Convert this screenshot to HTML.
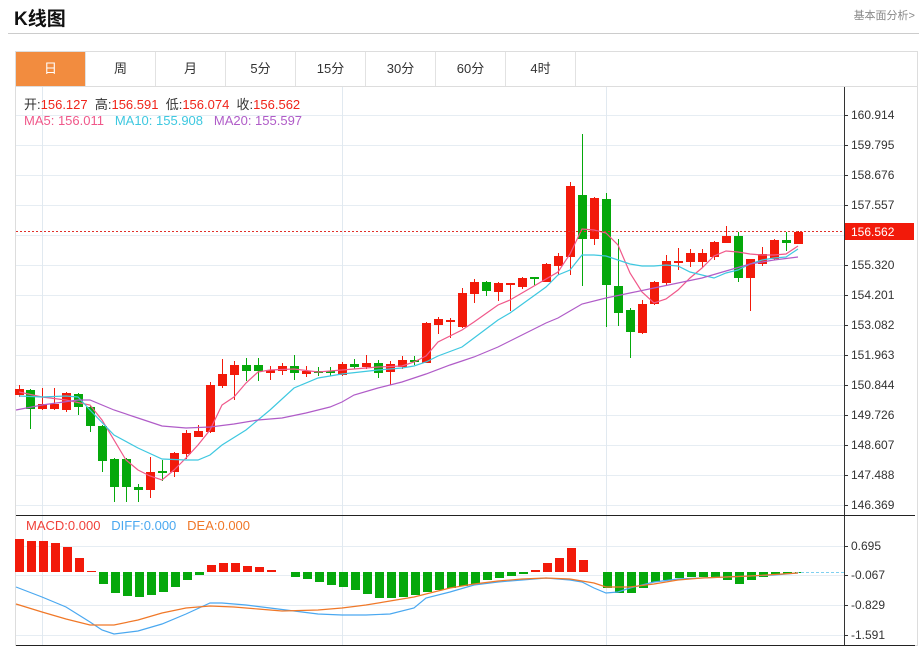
<!DOCTYPE html>
<html><head><meta charset="utf-8">
<style>
body{margin:0;width:919px;height:647px;background:#fff;font-family:"Liberation Sans","Noto Sans CJK SC",sans-serif;overflow:hidden;position:relative}
.t{position:absolute;left:14px;top:4px;font-size:19px;font-weight:bold;color:#111}
.more{position:absolute;right:4px;top:7px;font-size:11px;color:#888}
.hr{position:absolute;left:8px;right:0;top:33px;height:1px;background:#ccc}
.box{position:absolute;left:15px;top:51px;width:903px;height:595px;border:1px solid #ddd;box-sizing:border-box}
.tabs{position:absolute;left:16px;top:52px;height:34px;display:flex;border-bottom:1px solid #ddd;width:902px}
.tabs div{width:69px;border-right:1px solid #e2e2e2;text-align:center;line-height:34px;font-size:13px;color:#333}
.tabs div.on{background:#f28c3f;color:#fff}
.leg{position:absolute;left:24px;font-size:13px;white-space:pre}
</style></head><body>
<div class="t">K线图</div>
<div class="more">基本面分析&gt;</div>
<div class="hr"></div>
<div class="box"></div>
<div class="tabs"><div class="on">日</div><div>周</div><div>月</div><div>5分</div><div>15分</div><div>30分</div><div>60分</div><div>4时</div></div>
<svg id="s" width="919" height="647" style="position:absolute;left:0;top:0"></svg>
<div class="leg" style="top:94px;color:#333">开:<span style="color:#f0241a">156.127</span>  高:<span style="color:#f0241a">156.591</span>  低:<span style="color:#f0241a">156.074</span>  收:<span style="color:#f0241a">156.562</span></div>
<div class="leg" style="top:113px"><span style="color:#f0588a">MA5: 156.011</span>   <span style="color:#3ec8e0">MA10: 155.908</span>   <span style="color:#b05cc8">MA20: 155.597</span></div>
<div class="leg" style="top:518px;left:26px"><span style="color:#f0413a">MACD:0.000</span>   <span style="color:#4aa8f0">DIFF:0.000</span>   <span style="color:#f07828">DEA:0.000</span></div>
<script>
var s='';
function L(x1,y1,x2,y2,c,w,d){s+='<line x1="'+x1+'" y1="'+y1+'" x2="'+x2+'" y2="'+y2+'" stroke="'+c+'" stroke-width="'+(w||1)+'"'+(d?' stroke-dasharray="'+d+'"':'')+'/>';}
function T(x,y,t,c){s+='<text x="'+x+'" y="'+y+'" font-size="12" fill="'+(c||'#333')+'" font-family="Liberation Sans,sans-serif">'+t+'</text>';}
var pl=[[115,'160.914'],[145,'159.795'],[175,'158.676'],[205,'157.557'],[235,''],[265,'155.320'],[295,'154.201'],[325,'153.082'],[355,'151.963'],[385,'150.844'],[415,'149.726'],[445,'148.607'],[475,'147.488'],[505,'146.369']];
pl.forEach(function(p){L(16,p[0]+.5,844,p[0]+.5,'#e6edf3');L(844,p[0]+.5,848,p[0]+.5,'#333');if(p[1])T(851,p[0]+4,p[1]);});
[[546,'0.695'],[575,'-0.067'],[605,'-0.829'],[635,'-1.591']].forEach(function(p){L(16,p[0]+.5,844,p[0]+.5,'#e6edf3');L(844,p[0]+.5,848,p[0]+.5,'#333');T(851,p[0]+4,p[1]);});
[42,342,606].forEach(function(x){L(x+.5,87,x+.5,645,'#e1e9f0');});
var C=[[19,'r',389,395,385,397],[30,'g',390,409,389,429],[42,'r',404,409,388,410],[54,'r',404,409,388,410],[66,'r',393,410,392,412],[78,'g',394,407,393,415],[90,'g',407,426,406,432],[102,'g',426,461,425,472],[114,'g',459,487,458,502],[126,'g',459,487,458,502],[138,'g',487,490,484,502],[150,'r',472,490,457,498],[162,'g',471,472,460,481],[174,'r',453,472,452,477],[186,'r',433,454,430,459],[198,'r',431,437,425,437],[210,'r',385,432,382,433],[222,'r',374,386,359,388],[234,'r',365,375,361,400],[246,'g',365,371,358,381],[258,'g',365,371,358,381],[270,'r',370,373,366,380],[282,'r',366,371,363,375],[294,'g',366,373,355,380],[306,'r',371,374,366,377],[318,'g',371,373,367,376],[330,'g',371,373,367,376],[342,'r',364,375,362,376],[354,'g',364,367,359,369],[366,'r',363,367,355,369],[378,'g',363,373,360,378],[390,'r',364,372,361,385],[402,'r',360,367,356,369],[414,'g',360,362,356,365],[426,'r',323,363,322,363],[438,'r',319,325,317,334],[450,'r',320,322,318,338],[462,'r',293,327,288,328],[474,'r',282,294,279,303],[486,'g',282,291,281,296],[498,'r',283,292,282,301],[510,'r',283,284,283,311],[522,'r',278,287,277,289],[534,'g',277,279,277,285],[546,'r',264,282,263,282],[558,'r',256,266,253,275],[570,'r',186,257,182,275],[582,'g',195,239,134,286],[594,'r',198,239,197,245],[606,'g',199,285,193,327],[618,'g',286,313,239,326],[630,'g',310,332,308,358],[642,'r',304,333,300,334],[654,'r',282,304,281,305],[666,'r',261,283,255,286],[678,'r',261,263,248,270],[690,'r',253,262,249,267],[702,'r',253,262,249,267],[714,'r',242,257,241,260],[726,'r',236,243,226,243],[738,'g',236,278,232,282],[750,'r',259,278,259,311],[762,'r',254,264,247,266],[774,'r',240,259,239,260],[786,'g',240,243,232,251],[798,'r',232,244,231,244]];
C.forEach(function(c){var col=c[1]=='r'?'#f21a0a':'#05a80b';L(c[0]+.5,c[4],c[0]+.5,c[5],col);s+='<rect x="'+(c[0]-4)+'" y="'+c[2]+'" width="9" height="'+Math.max(2,c[3]-c[2])+'" fill="'+col+'"/>';});
function P(a,c){s+='<polyline fill="none" stroke="'+c+'" stroke-width="1.2" points="'+a.map(function(p){return p.join(',')}).join(' ')+'"/>';}
P([[19,392],[42,397],[66,400],[90,405],[102,420],[126,460],[138,470],[150,476],[162,480],[174,470],[186,458],[198,445],[210,430],[222,405],[234,397],[246,383],[258,372],[270,370],[294,369],[318,372],[342,370],[378,367],[402,366],[414,362],[426,356],[438,342],[462,330],[474,322],[498,305],[510,300],[558,272],[570,254],[582,229],[594,230],[606,233],[618,245],[630,273],[642,292],[654,303],[666,299],[678,290],[690,278],[702,268],[714,256],[726,251],[738,252],[750,254],[762,255],[774,255],[786,254],[798,246]],'#f0588a');
P([[19,396],[42,397],[66,396],[78,397],[90,410],[114,435],[138,448],[162,459],[186,460],[198,460],[210,455],[222,445],[246,430],[270,410],[294,388],[318,378],[342,374],[378,370],[402,368],[414,366],[426,362],[438,356],[462,347],[474,338],[498,320],[510,313],[546,287],[558,275],[570,270],[582,255],[594,255],[606,256],[618,260],[630,264],[642,266],[654,266],[666,265],[678,266],[690,272],[702,275],[714,278],[726,273],[738,270],[750,264],[762,260],[774,258],[786,257],[798,249]],'#3ec8e0');
P([[16,410],[42,405],[78,400],[90,400],[114,410],[138,418],[162,426],[186,428],[210,427],[234,424],[258,420],[282,418],[306,413],[330,407],[342,402],[354,395],[378,388],[402,382],[414,378],[426,374],[450,365],[462,361],[474,357],[498,347],[522,335],[546,323],[558,318],[570,311],[582,304],[606,298],[630,293],[654,288],[678,283],[702,278],[726,271],[750,264],[774,260],[798,257]],'#b05cc8');
L(16,231.5,844,231.5,'#e0302a',1,'2,2');
s+='<rect x="844" y="223" width="70" height="17" fill="#f21a0a"/>';T(851,236,'156.562','#fff');
var H=[539,541,541,543,547,558,571,584,593,596,597,595,592,587,580,575,565,563,563,566,567,570,572,577,579,582,585,587,590,594,598,598,597,595,592,590,588,586,584,580,578,576,574,570,563,558,548,560,572,588,593,593,588,582,580,578,577,577,577,580,584,580,577,575,574,573];
var Z=572;H.forEach(function(h,i){var x=19+12*i;if(Math.abs(h-Z)<1)return;var col=h<Z?'#f21a0a':'#05a80b';s+='<rect x="'+(x-4)+'" y="'+Math.min(h,Z)+'" width="9" height="'+Math.abs(h-Z)+'" fill="'+col+'"/>';});
L(796,572.5,844,572.5,'#7fd0f0',1,'3,2');
P([[16,587],[42,597],[66,607],[90,622],[102,630],[114,634],[138,631],[162,624],[186,614],[210,603],[222,603],[246,605],[270,608],[294,611],[318,614],[342,615],[366,615],[390,614],[414,608],[426,598],[450,592],[474,585],[498,582],[522,580],[546,578],[570,580],[582,582],[594,588],[606,593],[618,592],[630,588],[654,582],[678,579],[702,578],[726,577],[750,576],[774,575],[798,573]],'#4aa8f0');
P([[16,604],[42,612],[66,619],[90,625],[102,625],[114,625],[138,620],[162,613],[186,608],[210,606],[234,607],[258,609],[282,611],[318,610],[342,608],[366,605],[390,601],[414,597],[450,588],[474,584],[498,581],[522,579],[546,578],[570,579],[594,583],[606,587],[630,587],[654,584],[678,580],[702,578],[750,576],[798,573]],'#f07828');
L(844.5,87,844.5,646,'#333');L(16,515.5,915,515.5,'#222');L(16,645.5,915,645.5,'#222');
document.getElementById('s').innerHTML=s;
</script>
</body></html>
